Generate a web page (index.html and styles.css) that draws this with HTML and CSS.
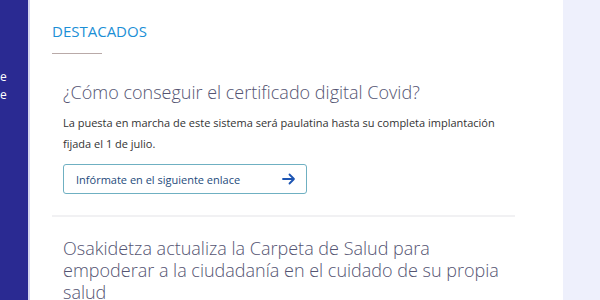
FILE: index.html
```html
<!DOCTYPE html>
<html lang="es">
<head>
    <meta charset="UTF-8">
    <meta name="viewport" content="width=device-width, initial-scale=1.0">
    <title>Destacados</title>
    <link rel="stylesheet" href="styles.css">
</head>
<body>
    <div class="page">
        <nav class="sidebar">
            <p class="side-line">e</p>
            <p class="side-line">e</p>
        </nav>
        <main class="content">
            <h2 class="section-title">DESTACADOS</h2>
            <article class="news">
                <h3 class="news-title">¿Cómo conseguir el certificado digital Covid?</h3>
                <p class="news-text">La puesta en marcha de este sistema será paulatina hasta su completa implantación fijada el 1 de julio.</p>
                <a class="news-link" href="#">
                    <span>Infórmate en el siguiente enlace</span>
                    <svg width="14" height="12" viewBox="0 0 14 12" fill="none" stroke="#1d55b3" stroke-width="1.8" stroke-linecap="round" stroke-linejoin="round">
                        <path d="M1 6h11M7.5 1.5L12 6l-4.5 4.5"/>
                    </svg>
                </a>
            </article>
            <article class="news">
                <h3 class="news-title">Osakidetza actualiza la Carpeta de Salud para empoderar a la ciudadanía en el cuidado de su propia salud</h3>
            </article>
        </main>
        <aside class="aside"></aside>
    </div>
</body>
</html>
```

FILE: styles.css
```css
body {
    margin: 0;
    font-family: "Open Sans", Arial, sans-serif;
    background-color: #ffffff;
}
.page {
    display: flex;
    height: 300px;
    overflow: hidden;
}
.sidebar {
    width: 28px;
    flex-shrink: 0;
    background-color: #2a2a92;
    border-right: 2px solid #d4d6f0;
    overflow: hidden;
    padding-top: 68px;
}
.side-line {
    margin: 0;
    color: #ffffff;
    font-size: 12px;
    line-height: 18px;
}
.content {
    flex: 1;
    padding: 20px 48px 0 22px;
}
.aside {
    width: 37px;
    flex-shrink: 0;
    background-color: #eef0fc;
}
.section-title {
    margin: 0;
    font-size: 15px;
    font-weight: 400;
    line-height: 22px;
    color: #1b8fd6;
}
.section-title::after {
    content: "";
    display: block;
    width: 50px;
    height: 1px;
    margin-top: 11px;
    background-color: #b9aaa8;
}
.news {
    padding: 27px 0 0 11px;
    border-bottom: 2px solid #f1f1f3;
}
.news:last-child {
    border-bottom: none;
    padding-top: 20px;
}
.news-title {
    max-width: 445px;
    margin: 0;
    font-size: 18px;
    font-weight: 300;
    line-height: 22px;
    color: #545472;
}
.news-text {
    margin: 9px 0 0 0;
    font-size: 11px;
    line-height: 21px;
    color: #333333;
}
.news-link {
    display: flex;
    align-items: center;
    justify-content: space-between;
    width: 244px;
    height: 30px;
    box-sizing: border-box;
    padding: 0 10px 0 12px;
    margin: 10px 0 21px 0;
    border: 1px solid #6fb0c2;
    border-radius: 3px;
    text-decoration: none;
    color: #254b7c;
    font-size: 11px;
}
```
